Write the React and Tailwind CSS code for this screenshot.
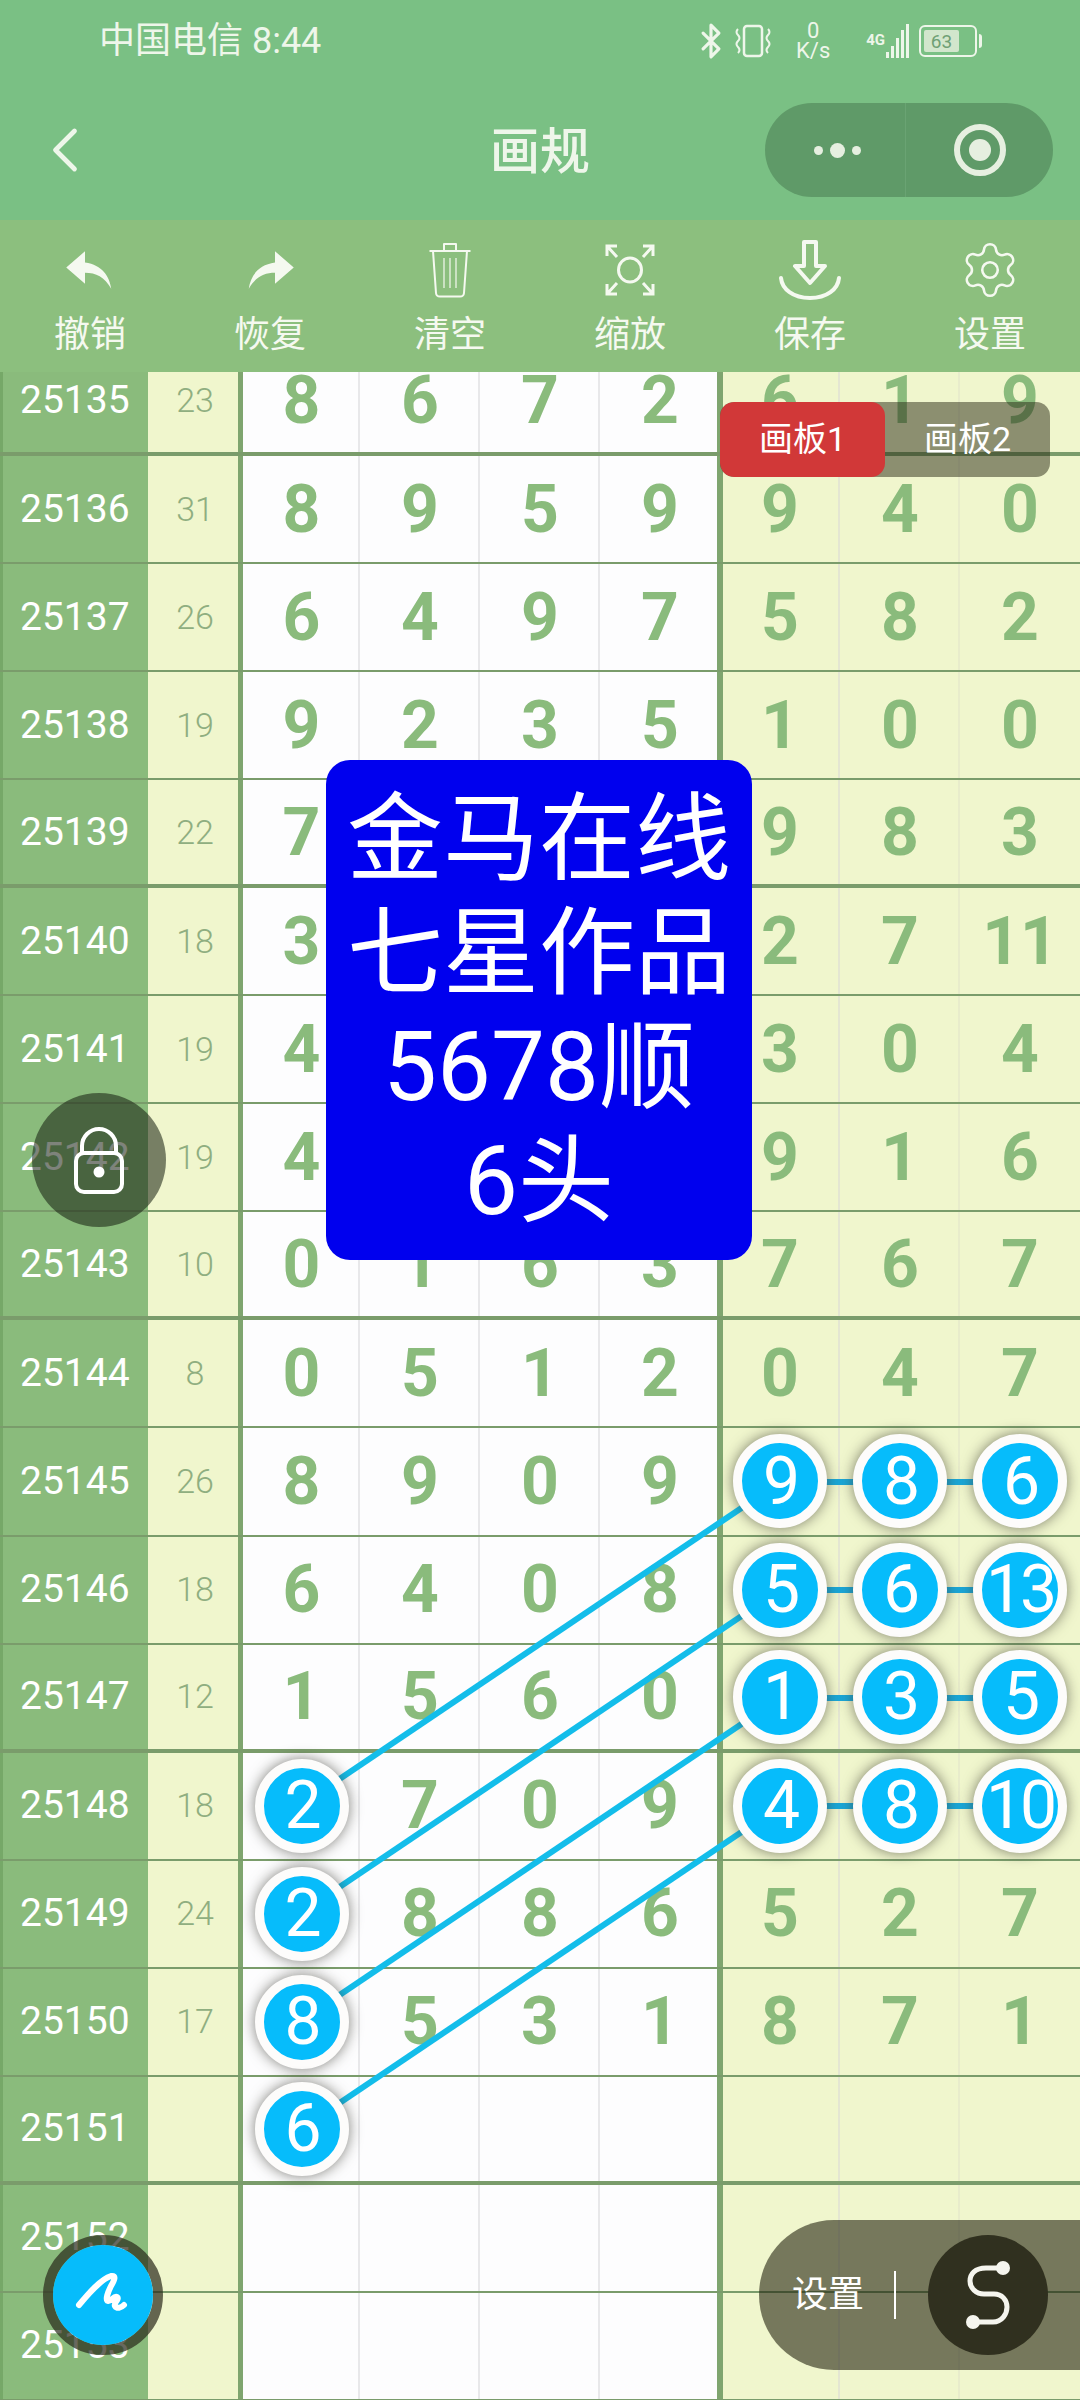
import { Bluetooth, ChevronLeft, Settings } from 'lucide-react'

const rows = [
  { id: '25135', sum: '23', nums: ['8', '6', '7', '2', '6', '1', '9'] },
  { id: '25136', sum: '31', nums: ['8', '9', '5', '9', '9', '4', '0'] },
  { id: '25137', sum: '26', nums: ['6', '4', '9', '7', '5', '8', '2'] },
  { id: '25138', sum: '19', nums: ['9', '2', '3', '5', '1', '0', '0'] },
  { id: '25139', sum: '22', nums: ['7', '1', '8', '6', '9', '8', '3'] },
  { id: '25140', sum: '18', nums: ['3', '4', '2', '9', '2', '7', '11'] },
  { id: '25141', sum: '19', nums: ['4', '0', '7', '8', '3', '0', '4'] },
  { id: '25142', sum: '19', nums: ['4', '2', '5', '8', '9', '1', '6'] },
  { id: '25143', sum: '10', nums: ['0', '1', '6', '3', '7', '6', '7'] },
  { id: '25144', sum: '8', nums: ['0', '5', '1', '2', '0', '4', '7'] },
  { id: '25145', sum: '26', nums: ['8', '9', '0', '9', '9', '8', '6'], balls: [4, 5, 6] },
  { id: '25146', sum: '18', nums: ['6', '4', '0', '8', '5', '6', '13'], balls: [4, 5, 6] },
  { id: '25147', sum: '12', nums: ['1', '5', '6', '0', '1', '3', '5'], balls: [4, 5, 6] },
  { id: '25148', sum: '18', nums: ['2', '7', '0', '9', '4', '8', '10'], balls: [0, 4, 5, 6] },
  { id: '25149', sum: '24', nums: ['2', '8', '8', '6', '5', '2', '7'], balls: [0] },
  { id: '25150', sum: '17', nums: ['8', '5', '3', '1', '8', '7', '1'], balls: [0] },
  { id: '25151', sum: '', nums: ['6', '', '', '', '', '', ''], balls: [0] },
  { id: '25152', sum: '', nums: ['', '', '', '', '', '', ''] },
  { id: '25153', sum: '', nums: ['', '', '', '', '', '', ''] },
]

// thick separator every four rows, starting after 25135
const thickRows = ['25135', '25139', '25143', '25147', '25151']

const links = [
  [301, 1805, 780, 1482],
  [301, 1913, 780, 1590],
  [301, 2021, 780, 1698],
  [301, 2129, 780, 1806],
]

function Ball({ value }) {
  return (
    <div className="relative z-20 flex h-[94px] w-[94px] items-center justify-center rounded-full border-[9px] border-[#fdfcfb] bg-[#06bcfb] text-[66px] font-normal tracking-[-3px] text-white shadow-[0_0_14px_rgba(60,60,50,0.65)]">
      {value}
    </div>
  )
}

function Row({ row }) {
  const thick = thickRows.includes(row.id)
  return (
    <div className={`flex h-[108.06px] ${thick ? 'border-b-4 border-[#7a9c6b]' : 'border-b-2 border-[#7a9c6b]'}`}>
      <div className="flex w-[148px] items-center border-l-[3px] border-[#76a868] bg-[#8abb7c] pl-[17px] text-[39px] leading-none text-white">
        {row.id}
      </div>
      <div className="flex w-[95px] items-center justify-center border-r-[5px] border-[#7fa56f] bg-[#f0f6cd] pl-[4px] text-[34px] font-light text-[#8fae80]">
        {row.sum}
      </div>
      {row.nums.map((n, i) => {
        const isBall = row.balls && row.balls.includes(i)
        return (
          <div
            key={i}
            className={`flex items-center justify-center text-[66px] font-bold text-[#8abb7c]
              ${i === 0 ? 'w-[117px]' : 'w-[120px]'}
              ${i < 4 ? 'bg-[#fdfdfe]' : 'bg-[#f0f6cd]'}
              ${i === 3 ? 'shadow-[inset_-3px_0_0_#7fa56f]' : i === 4 ? 'shadow-[inset_3px_0_0_#7fa56f,inset_-2px_0_0_#e4e6d2]' : i === 6 ? '' : i === 5 ? 'shadow-[inset_-2px_0_0_#e8eccb]' : 'shadow-[inset_-2px_0_0_#e8e8ea]'}`}
          >
            {isBall ? <Ball value={n} /> : n}
          </div>
        )
      })}
    </div>
  )
}

function StatusBar() {
  return (
    <div className="flex h-[82px] items-center pl-[99px] pr-[98px] text-[#eef6ea]">
      <span className="text-[36px]">中国电信 8:44</span>
      <div className="ml-auto flex items-center">
        <Bluetooth size={38} strokeWidth={2} className="mr-[2px]" />
        <svg viewBox="0 0 42 36" className="h-[36px] w-[42px]" fill="none" stroke="currentColor" strokeWidth="2.5">
          <rect x="12" y="3" width="18" height="30" rx="3" />
          <path d="M6 6q-3 3 0 6t0 6 0 6 0 6M36 6q3 3 0 6t0 6 0 6 0 6" strokeWidth="2" />
        </svg>
        <div className="ml-[20px] flex w-[38px] flex-col items-center text-[22px] leading-[20px]">
          <span>0</span>
          <span>K/s</span>
        </div>
        <div className="ml-[34px] flex h-[34px] items-end">
          <span className="mb-[10px] text-[15px] font-bold leading-none">4G</span>
          <div className="ml-[1px] flex items-end gap-[2px]">
            <span className="h-[6px] w-[3px] bg-current" />
            <span className="h-[12px] w-[3px] bg-current" />
            <span className="h-[20px] w-[3px] bg-current" />
            <span className="h-[28px] w-[3px] bg-current" />
            <span className="h-[34px] w-[3px] bg-current" />
          </div>
        </div>
        <div className="ml-[10px] flex items-center">
          <div className="flex h-[32px] w-[58px] items-center rounded-[6px] border-2 border-current p-[3px]">
            <div className="flex h-full w-[35px] items-center justify-center rounded-[2px] bg-[#d2e6cc] text-[19px] leading-none text-[#6fa075]">
              63
            </div>
          </div>
          <span className="ml-[2px] h-[14px] w-[3px] rounded-r-sm bg-current" />
        </div>
      </div>
    </div>
  )
}

function NavBar() {
  return (
    <div className="mt-[21px] grid h-[94px] grid-cols-[1fr_auto_1fr] items-center text-[#eef6ea]">
      <ChevronLeft size={76} strokeWidth={1.5} className="ml-[27px]" />
      <span className="mt-[4px] text-[50px] font-medium leading-none">画规</span>
      <div className="mr-[27px] flex h-[94px] w-[288px] items-center justify-self-end rounded-full bg-[#5f9a68]">
        <div className="flex h-full w-[141px] items-center justify-center gap-[7px] border-r border-[#6aa373] pl-[4px]">
          <span className="h-[9px] w-[9px] rounded-full bg-[#e6efe0]" />
          <span className="h-[15px] w-[15px] rounded-full bg-[#e6efe0]" />
          <span className="h-[9px] w-[9px] rounded-full bg-[#e6efe0]" />
        </div>
        <div className="flex flex-1 items-center justify-center">
          <div className="flex h-[52px] w-[52px] items-center justify-center rounded-full border-[6px] border-[#e6efe0]">
            <span className="h-[22px] w-[22px] rounded-full bg-[#e6efe0]" />
          </div>
        </div>
      </div>
    </div>
  )
}

function UndoIcon() {
  return (
    <svg viewBox="0 0 24 24" className="h-[60px] w-[60px]" fill="currentColor">
      <path d="M10 9V4.5L2.5 11l7.5 6.5v-4.4c4.4 0 7.8 1.7 10.5 6.4C19.8 14.6 17 10 10 9z" />
    </svg>
  )
}

function RedoIcon() {
  return (
    <svg viewBox="0 0 24 24" className="h-[60px] w-[60px]" fill="currentColor">
      <path d="M14 9V4.5l7.5 6.5-7.5 6.5v-4.4c-4.4 0-7.8 1.7-10.5 6.4C4.2 14.6 7 10 14 9z" />
    </svg>
  )
}

function TrashIcon() {
  return (
    <svg viewBox="0 0 44 56" className="h-[56px] w-[44px]" fill="none" stroke="currentColor" strokeWidth="2" strokeLinejoin="round">
      <path d="M16 9V2h12v7M1.5 9h41" />
      <path d="M5 9l3 42q.3 3.5 4 3.5h20q3.7 0 4-3.5l3-42" />
      <path d="M16 16v30M22 16v30M28 16v30" strokeWidth="1.2" />
    </svg>
  )
}

function ZoomIcon() {
  return (
    <svg viewBox="0 0 50 52" className="h-[52px] w-[50px]" fill="none" stroke="currentColor" strokeWidth="3">
      <ellipse cx="25" cy="26" rx="11.5" ry="12" />
      <path d="M2 12V2h10M2 2l10 11M48 12V2H38M48 2L38 13M2 40v10h10M2 50l10-11M48 40v10H38M48 50L38 39" />
    </svg>
  )
}

function SaveIcon() {
  return (
    <svg viewBox="0 0 62 60" className="h-[60px] w-[62px]" fill="none" stroke="currentColor" strokeWidth="4" strokeLinejoin="round" strokeLinecap="round">
      <path d="M25 2h12v24h9L31 43 16 26h9z" />
      <path d="M2 38c1 11 12 20 29 20s28-9 29-20" />
    </svg>
  )
}

function Toolbar() {
  const items = [
    { label: '撤销', icon: <UndoIcon /> },
    { label: '恢复', icon: <RedoIcon /> },
    { label: '清空', icon: <TrashIcon /> },
    { label: '缩放', icon: <ZoomIcon /> },
    { label: '保存', icon: <SaveIcon /> },
    { label: '设置', icon: <Settings size={62} strokeWidth={1} /> },
  ]
  return (
    <div className="grid h-[152px] grid-cols-6 bg-[#8cbf7e] pt-[20px] text-[#f5f9f0]">
      {items.map((item) => (
        <div key={item.label} className="flex flex-col items-center">
          <div className="flex h-[60px] items-center justify-center">{item.icon}</div>
          <span className="mt-[17px] text-[36px] leading-[36px]">{item.label}</span>
        </div>
      ))}
    </div>
  )
}

function LinkLines() {
  return (
    <svg viewBox="0 0 1080 2054" className="absolute left-0 top-0 z-10 h-[2054px] w-[1080px]">
      <g transform="translate(0,-348)">
        {links.map(([x1, y1, x2, y2]) => (
          <g key={y1}>
            <line x1={x1} y1={y1} x2={x2} y2={y2} stroke="#13bdea" strokeWidth="6" />
            <line x1={x2} y1={y2} x2="1020" y2={y2} stroke="#1ba8d8" strokeWidth="6" />
          </g>
        ))}
      </g>
    </svg>
  )
}

export default function App() {
  return (
    <div className="relative flex h-[2400px] w-[1080px] flex-col overflow-hidden bg-[#8cbf7e] font-['Roboto','Noto_Sans_CJK_SC',sans-serif]">
      <div className="h-[220px] bg-[#7ac084]">
        <StatusBar />
        <NavBar />
      </div>
      <Toolbar />

      {/* Table, scrolled so the first row is cut off */}
      <div className="flex-1 overflow-hidden">
        <div className="relative mt-[-24px]">
          {rows.map((row) => (
            <Row key={row.id} row={row} />
          ))}
          <LinkLines />
        </div>
      </div>

      {/* Board tabs */}
      <div className="absolute left-[720px] top-[402px] z-30 flex h-[75px] w-[330px] overflow-hidden rounded-[14px] bg-[rgba(40,40,20,0.5)] text-[34px] text-white">
        <div className="flex w-[165px] items-center justify-center rounded-[14px] bg-[#d13838]">画板1</div>
        <div className="flex flex-1 items-center justify-center">画板2</div>
      </div>

      {/* Title card */}
      <div className="absolute left-[326px] top-[760px] z-30 flex h-[500px] w-[426px] flex-col items-center justify-center rounded-[24px] bg-[#0000ee] text-[96px] leading-[114px] text-white">
        <span>金马在线</span>
        <span>七星作品</span>
        <span>5678顺</span>
        <span>6头</span>
      </div>

      {/* Lock */}
      <div className="absolute left-[32px] top-[1093px] z-30 flex h-[134px] w-[134px] items-center justify-center rounded-full bg-[rgba(20,30,15,0.55)]">
        <svg viewBox="0 0 50 68" className="h-[68px] w-[50px]" fill="none" stroke="white" strokeWidth="4">
          <path d="M8 28V20a17 17 0 0 1 34 0v8" />
          <rect x="2" y="27" width="46" height="39" rx="8" />
          <circle cx="25" cy="46" r="5.5" fill="white" stroke="none" />
        </svg>
      </div>

      {/* Pen */}
      <div className="absolute left-[43px] top-[2235px] z-30 flex h-[120px] w-[120px] items-center justify-center rounded-full border-[10px] border-[rgba(40,40,25,0.7)] bg-clip-padding">
        <div className="flex h-[100px] w-[100px] items-center justify-center rounded-full bg-[#06bcfb]">
          <svg viewBox="0 0 60 60" className="h-[60px] w-[60px]" fill="none" stroke="white" strokeWidth="6" strokeLinecap="round" strokeLinejoin="round">
            <path d="M6 40C16 28 28 14 38 11c6-1 3 5 0 10-3 6-6 14-3 15 3 1 6-6 9-4 3 2-4 6-2 9 2 3 6 2 9-1" />
          </svg>
        </div>
      </div>

      {/* Settings capsule */}
      <div className="absolute left-[759px] top-[2220px] z-30 flex h-[150px] w-[321px] items-center rounded-l-[75px] bg-[rgba(30,30,10,0.58)] text-white">
        <span className="ml-[33px] text-[36px] leading-none">设置</span>
        <span className="ml-[30px] h-[48px] w-[2px] bg-white" />
        <div className="ml-[32px] flex h-[120px] w-[120px] items-center justify-center rounded-full bg-[#30301f]">
          <svg viewBox="0 0 48 72" className="h-[72px] w-[48px]" fill="none" stroke="#f5f5ee" strokeWidth="5" strokeLinecap="round">
            <path d="M39 9H22C11 9 6 15 6 22s6 13 14 13h10c8 0 13 6 13 13s-5 15-14 15H9" />
            <circle cx="39" cy="9" r="7" fill="#f5f5ee" stroke="none" />
            <circle cx="9" cy="63" r="7" fill="#f5f5ee" stroke="none" />
          </svg>
        </div>
      </div>
    </div>
  )
}
